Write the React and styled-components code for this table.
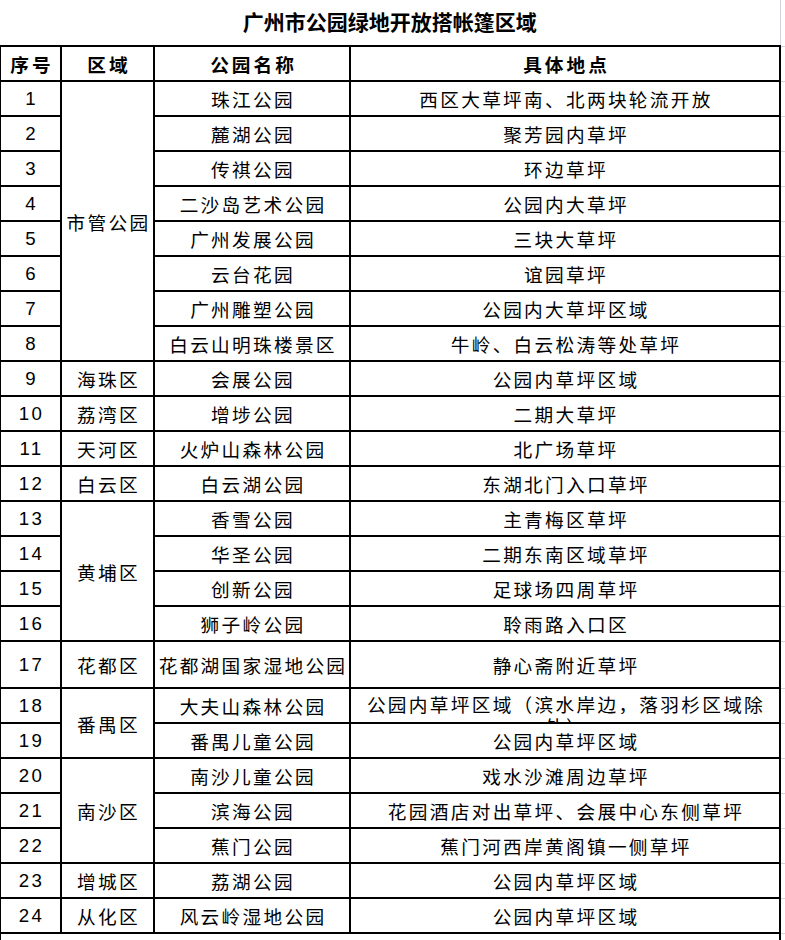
import styled, { createGlobalStyle } from 'styled-components';

const GlobalStyle = createGlobalStyle`
  html, body {
    margin: 0;
    padding: 0;
    background: #fff;
  }
  body {
    font-family: "Liberation Sans", "Noto Sans CJK SC", sans-serif;
    color: #000;
  }
`;

const Sheet = styled.div`
  width: 785px;
  height: 940px;
  overflow: hidden;
`;

const Grid = styled.table`
  border-collapse: collapse;
  table-layout: fixed;
  width: 810px;
  margin-left: -1px;
`;

const Row = styled.tr`
  height: ${({ $h }) => $h || 35}px;
`;

const TitleCell = styled.td`
  padding: 0;
  text-align: center;
  vertical-align: middle;
  font-size: 21px;
  font-weight: 700;
  line-height: 1;
`;

const HeadCell = styled.th`
  border: 2px solid #000;
  padding: 0 0 0 3px;
  text-align: center;
  vertical-align: middle;
  font-size: 18.67px;
  font-weight: 700;
  letter-spacing: 3px;
  white-space: nowrap;
`;

const Cell = styled.td`
  border: 2px solid #000;
  padding: 0 0 0 2px;
  text-align: center;
  vertical-align: middle;
  font-size: 18.67px;
  letter-spacing: 2.3px;
  white-space: nowrap;
  overflow: hidden;
`;

const Clip = styled.div`
  box-sizing: border-box;
  height: 33px;
  overflow: hidden;
  padding: 6px 12px 0;
  line-height: 22px;
  white-space: normal;
`;

// spreadsheet column past the table, only the light gridlines show
const GapCell = styled.td`
  padding: 0;
  border-left: 1px solid #d3d4de;
  border-bottom: 1px solid #d3d4de;
`;

const NoteCell = styled.td`
  border-left: 2px solid #000;
  border-right: 2px solid #000;
  border-top: 2px solid #000;
  padding: 0;
`;

const rows = [
  { n: 1, area: '市管公园', span: 8, park: '珠江公园', place: '西区大草坪南、北两块轮流开放' },
  { n: 2, park: '麓湖公园', place: '聚芳园内草坪' },
  { n: 3, park: '传祺公园', place: '环边草坪' },
  { n: 4, park: '二沙岛艺术公园', place: '公园内大草坪' },
  { n: 5, park: '广州发展公园', place: '三块大草坪' },
  { n: 6, park: '云台花园', place: '谊园草坪' },
  { n: 7, park: '广州雕塑公园', place: '公园内大草坪区域' },
  { n: 8, park: '白云山明珠楼景区', place: '牛岭、白云松涛等处草坪' },
  { n: 9, area: '海珠区', park: '会展公园', place: '公园内草坪区域' },
  { n: 10, area: '荔湾区', park: '增埗公园', place: '二期大草坪' },
  { n: 11, area: '天河区', park: '火炉山森林公园', place: '北广场草坪' },
  { n: 12, area: '白云区', park: '白云湖公园', place: '东湖北门入口草坪' },
  { n: 13, area: '黄埔区', span: 4, park: '香雪公园', place: '主青梅区草坪' },
  { n: 14, park: '华圣公园', place: '二期东南区域草坪' },
  { n: 15, park: '创新公园', place: '足球场四周草坪' },
  { n: 16, park: '狮子岭公园', place: '聆雨路入口区' },
  { n: 17, area: '花都区', park: '花都湖国家湿地公园', place: '静心斋附近草坪', h: 47 },
  { n: 18, area: '番禺区', span: 2, park: '大夫山森林公园', place: '公园内草坪区域（滨水岸边，落羽杉区域除外）', wrap: true },
  { n: 19, park: '番禺儿童公园', place: '公园内草坪区域' },
  { n: 20, area: '南沙区', span: 3, park: '南沙儿童公园', place: '戏水沙滩周边草坪' },
  { n: 21, park: '滨海公园', place: '花园酒店对出草坪、会展中心东侧草坪' },
  { n: 22, park: '蕉门公园', place: '蕉门河西岸黄阁镇一侧草坪' },
  { n: 23, area: '增城区', park: '荔湖公园', place: '公园内草坪区域' },
  { n: 24, area: '从化区', park: '风云岭湿地公园', place: '公园内草坪区域' },
];

export default function App() {
  return (
    <Sheet>
      <GlobalStyle />
      <Grid>
        <colgroup>
          <col style={{ width: 61 }} />
          <col style={{ width: 93 }} />
          <col style={{ width: 196 }} />
          <col style={{ width: 430 }} />
          <col style={{ width: 30 }} />
        </colgroup>
        <tbody>
          <Row $h={46}>
            <TitleCell colSpan={4}>广州市公园绿地开放搭帐篷区域</TitleCell>
            <GapCell />
          </Row>
          <Row>
            <HeadCell>序号</HeadCell>
            <HeadCell>区域</HeadCell>
            <HeadCell>公园名称</HeadCell>
            <HeadCell>具体地点</HeadCell>
            <GapCell />
          </Row>
          {rows.map((r) => (
            <Row key={r.n} $h={r.h}>
              <Cell>{r.n}</Cell>
              {r.area && <Cell rowSpan={r.span || 1}>{r.area}</Cell>}
              <Cell>{r.park}</Cell>
              <Cell>{r.wrap ? <Clip>{r.place}</Clip> : r.place}</Cell>
              <GapCell />
            </Row>
          ))}
          <Row>
            <NoteCell colSpan={4} />
            <GapCell />
          </Row>
        </tbody>
      </Grid>
    </Sheet>
  );
}
